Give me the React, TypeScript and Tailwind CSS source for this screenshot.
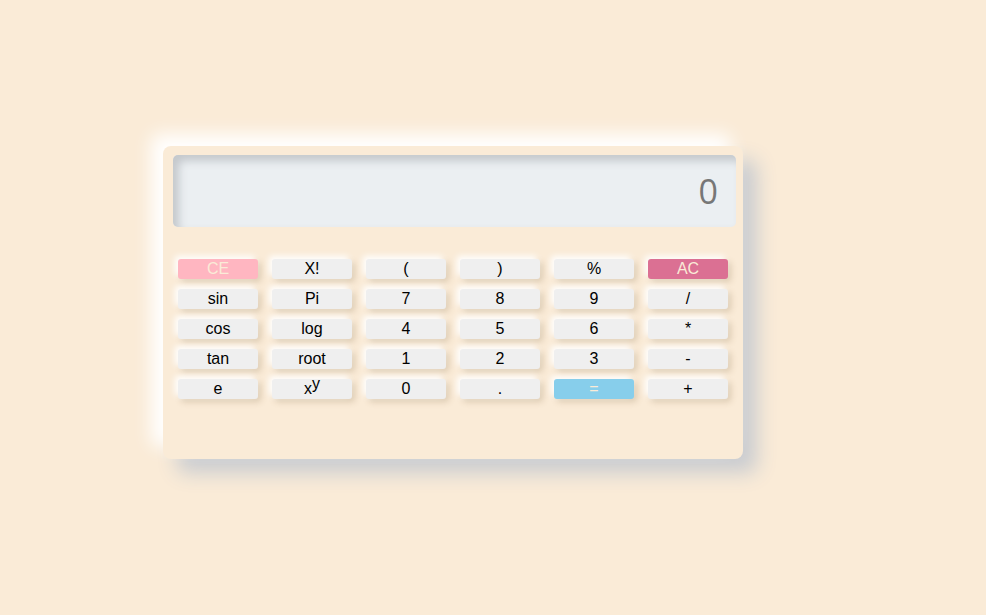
const KEYS: { label: React.ReactNode; tone?: 'ce' | 'ac' | 'eq' }[] = [
  { label: 'CE', tone: 'ce' },
  { label: 'X!' },
  { label: '(' },
  { label: ')' },
  { label: '%' },
  { label: 'AC', tone: 'ac' },
  { label: 'sin' },
  { label: 'Pi' },
  { label: '7' },
  { label: '8' },
  { label: '9' },
  { label: '/' },
  { label: 'cos' },
  { label: 'log' },
  { label: '4' },
  { label: '5' },
  { label: '6' },
  { label: '*' },
  { label: 'tan' },
  { label: 'root' },
  { label: '1' },
  { label: '2' },
  { label: '3' },
  { label: '-' },
  { label: 'e' },
  {
    label: (
      <>
        x<sup className="text-[16px] relative -top-[5px]">y</sup>
      </>
    ),
  },
  { label: '0' },
  { label: '.' },
  { label: '=', tone: 'eq' },
  { label: '+' },
];

export default function App() {
  return (
    <div className="min-h-[615px] w-full bg-[#faebd7] font-['Liberation_Sans',Arial,sans-serif]">
      <div className="pt-[146px] pl-[163px]">
        {/* Calculator body */}
        <div className="w-[580px] h-[313px] rounded-[8px] bg-[#faebd7] shadow-[-12px_-12px_18px_#ffffff,14px_14px_20px_#c9ccd1]">
          {/* Display */}
          <div className="pt-[9px] pl-[10px]">
            <div className="w-[563px] h-[72px] rounded-[5px] bg-[#ebeff2] shadow-[inset_6px_6px_8px_#c4c8cc] flex items-center justify-end pr-[18px]">
              <span className="text-[34px] leading-none text-[#777777] font-['Open_Sans',sans-serif]">0</span>
            </div>
          </div>

          {/* Keypad */}
          <div className="mt-[32px] pl-[15px] grid grid-cols-[repeat(6,80px)] gap-x-[14px] gap-y-[10px]">
            {KEYS.map((k, i) => (
              <button
                key={i}
                className={`h-[20px] w-[80px] rounded-[3px] text-[16px] leading-[20px] flex items-center justify-center shadow-[-3px_-3px_6px_#ffffff,3px_3px_6px_rgba(120,90,50,0.22)] ${
                  k.tone === 'ce'
                    ? 'bg-[#ffb6c1] text-[#faebd7]'
                    : k.tone === 'ac'
                    ? 'bg-[#db7093] text-[#faebd7]'
                    : k.tone === 'eq'
                    ? 'bg-[#87ceeb] text-[#faebd7]'
                    : 'bg-[#efefef] text-black'
                }`}
              >
                {k.label}
              </button>
            ))}
          </div>
        </div>
      </div>
    </div>
  );
}
